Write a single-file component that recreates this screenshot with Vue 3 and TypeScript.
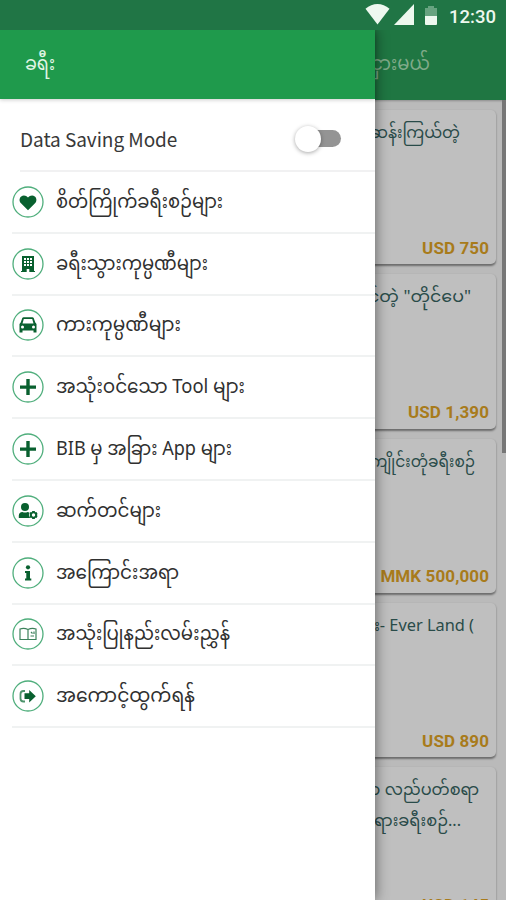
<script setup lang="ts">
interface MenuItem {
  label: string
  icon: string
  width: number
}

interface Tour {
  lines: { text: string; start: number; width: number }[]
  price: string
}

const menu: MenuItem[] = [
  { label: 'စိတ်ကြိုက်ခရီးစဉ်များ', icon: 'heart', width: 167 },
  { label: 'ခရီးသွားကုမ္ပဏီများ', icon: 'building', width: 152 },
  { label: 'ကားကုမ္ပဏီများ', icon: 'car', width: 125 },
  { label: 'အသုံးဝင်သော Tool များ', icon: 'plus', width: 189 },
  { label: 'BIB မှ အခြား App များ', icon: 'plus', width: 176 },
  { label: 'ဆက်တင်များ', icon: 'user', width: 105 },
  { label: 'အကြောင်းအရာ', icon: 'info', width: 123 },
  { label: 'အသုံးပြုနည်းလမ်းညွှန်', icon: 'book', width: 174 },
  { label: 'အကောင့်ထွက်ရန်', icon: 'logout', width: 139 },
]

const tours: Tour[] = [
  { lines: [{ text: 'ဆန်းကြယ်တဲ့', start: 370, width: 90 }], price: 'USD 750' },
  { lines: [{ text: 'င်တဲ့ "တိုင်ပေ"', start: 368, width: 103 }], price: 'USD 1,390' },
  { lines: [{ text: 'ကျိုင်းတုံခရီးစဉ်', start: 370, width: 105 }], price: 'MMK 500,000' },
  { lines: [{ text: 'ား- Ever Land (', start: 357, width: 117 }], price: 'USD 890' },
  {
    lines: [
      { text: 'ရာ လည်ပတ်စရာ', start: 362, width: 117 },
      { text: 'ရားခရီးစဉ်...', start: 374, width: 87 },
    ],
    price: 'USD 145',
  },
]
</script>

<template>
  <div class="screen">
    <header class="status">
      <svg class="wifi" viewBox="0 0 26 22"><path d="M.5 5.500C8-1 18-1 25.500 5.500L13 22Z" /></svg>
      <svg class="signal" viewBox="0 0 20 21"><path d="M20 0V21H0Z" /></svg>
      <svg class="battery" viewBox="0 0 12 19">
        <path class="faint" d="M0 2H3V0H9V2H12V10H0Z" />
        <path d="M0 10H12V18Q12 19 11 19H1Q0 19 0 18Z" />
      </svg>
      <span class="clock">12:30</span>
    </header>

    <div class="body">
      <main class="page">
        <div class="toolbar">
          <svg class="line" width="506" height="40">
            <text x="371" y="24" textLength="59" lengthAdjust="spacingAndGlyphs">ငှားမယ်</text>
          </svg>
        </div>
        <div class="list">
          <article v-for="tour in tours" :key="tour.price" class="card">
            <svg v-for="l in tour.lines" :key="l.text" class="line" width="496" height="31">
              <text :x="l.start" y="21" :textLength="l.width" lengthAdjust="spacingAndGlyphs">{{ l.text }}</text>
            </svg>
            <div class="price">{{ tour.price }}</div>
          </article>
        </div>
        <div class="scrollbar"></div>
      </main>

      <aside class="drawer">
        <div class="drawer-head">
          <svg width="120" height="40">
            <text x="25" y="24" textLength="30" lengthAdjust="spacingAndGlyphs">ခရီး</text>
          </svg>
        </div>
        <div class="saving">
          <span class="saving-label">Data Saving Mode</span>
          <span class="switch"><i class="knob"></i></span>
        </div>
        <nav>
          <div v-for="item in menu" :key="item.label" class="item">
            <svg class="icon" viewBox="0 0 32 32">
              <circle class="ring" cx="16" cy="16" r="15" />
              <path v-if="item.icon === 'heart'" d="M16 24.300L9 17.300C6.800 15 7.400 11.800 9.200 10.400C11.300 8.800 14.300 9.300 16 11.600C17.700 9.300 20.700 8.800 22.800 10.400C24.600 11.800 25.200 15 23 17.300Z" />
              <path v-else-if="item.icon === 'building'" fill-rule="evenodd" d="M10 8H22V23H23V24H17.300V21H14.700V24H9V23H10ZM12 10V12H14V10ZM15 10V12H17V10ZM18 10V12H20V10ZM12 13V15H14V13ZM15 13V15H17V13ZM18 13V15H20V13ZM12 16V18H14V16ZM15 16V18H17V16ZM18 16V18H20V16Z" />
              <path v-else-if="item.icon === 'car'" fill-rule="evenodd" d="M10.300 9Q10.700 8.300 11.600 8.300H20.400Q21.300 8.300 21.700 9L23.300 13.500L24.500 15V23.500H21.500V21.500H10.500V23.500H7.500V15L8.700 13.500ZM11.800 10L10.500 14.500H21.500L20.200 10ZM10.500 16.600A1.500 1.500 0 1 0 10.500 19.600A1.500 1.500 0 1 0 10.500 16.600ZM21.500 16.600A1.500 1.500 0 1 0 21.500 19.600A1.500 1.500 0 1 0 21.500 16.600Z" />
              <path v-else-if="item.icon === 'plus'" d="M14.300 8H17.700V14.400H24V17.700H17.700V24H14.300V17.700H8V14.400H14.300Z" />
              <template v-else-if="item.icon === 'user'">
                <circle cx="13" cy="12" r="4" />
                <path d="M6.800 23V20.500Q7 17 10.500 17Q13 18 15.500 17L17.500 17.400Q16 20.500 18.300 23Z" />
                <path fill-rule="evenodd" d="M20.300 16H22.700L23.200 17.200L24.500 17.100L25.600 19.100L24.800 20L25.600 20.900L24.500 22.900L23.200 22.800L22.700 24H20.300L19.800 22.800L18.500 22.900L17.400 20.900L18.200 20L17.400 19.100L18.500 17.100L19.800 17.200ZM21.500 18.300A1.700 1.700 0 1 0 21.500 21.700A1.700 1.700 0 1 0 21.500 18.300Z" />
              </template>
              <template v-else-if="item.icon === 'info'">
                <circle cx="16" cy="10.300" r="2.100" />
                <path d="M13 14H18V21.500H19.300V23.500H13V21.500H14.300V16H13Z" />
              </template>
              <path v-else-if="item.icon === 'book'" class="outline" d="M16 11.500Q12 9.500 8 11V21.500H24V11Q20 9.500 16 11.500ZM16 11.500V21.500M19 14L20.500 15.500M18.500 18H22M22 13.500V16" />
              <template v-else>
                <path d="M12.500 13.200H17.200V10L23.800 16.200L17.200 22.400V19H12.500Z" />
                <path class="bracket" d="M13 11H11.500Q8.500 11 8.500 14V18.500Q8.500 21.500 11.500 21.500H13" />
              </template>
            </svg>
            <svg class="label" width="250" height="44">
              <text x="0" y="28" :textLength="item.width" lengthAdjust="spacingAndGlyphs">{{ item.label }}</text>
            </svg>
          </div>
        </nav>
      </aside>
    </div>
  </div>
</template>

<style>
body {
  margin: 0;
}
</style>

<style scoped>
.screen {
  width: 506px;
  height: 900px;
  overflow: hidden;
  display: flex;
  flex-direction: column;
  font-family: 'Noto Sans', 'Noto Sans Myanmar', 'Padauk', sans-serif;
}
.status {
  position: relative;
  z-index: 1;
  height: 30px;
  flex: none;
  box-sizing: border-box;
  padding: 0 11px 0 0;
  display: flex;
  align-items: flex-start;
  justify-content: flex-end;
  background: #207545;
  fill: #edf8ef;
}
.wifi {
  width: 25px;
  height: 22px;
  margin: 3px 4px 0 0;
}
.signal {
  width: 20px;
  height: 21px;
  margin: 4px 11px 0 0;
}
.battery {
  width: 12px;
  height: 19px;
  margin: 6px 12px 0 0;
}
.faint {
  opacity: 0.35;
}
.clock {
  font: 500 18.500px/34px Roboto, sans-serif;
  color: #edf8ef;
  width: 46px;
  white-space: nowrap;
}
.body {
  position: relative;
  flex: 1;
  min-height: 0;
}
.page {
  height: 870px;
  overflow: hidden;
  background: #bababa;
}
.toolbar {
  height: 70px;
  box-sizing: border-box;
  padding-top: 16px;
  background: #1f7642;
  box-shadow: 0 1px 2px rgba(0, 0, 0, 0.25);
}
.toolbar text {
  fill: #7faa89;
  font-size: 19px;
}
.line,
.label {
  display: block;
}
.list {
  padding: 10px 10px 0 0;
  display: flex;
  flex-direction: column;
  gap: 10px;
}
.card {
  height: 154.300px;
  flex: none;
  box-sizing: border-box;
  padding-top: 7px;
  display: flex;
  flex-direction: column;
  background: #bfbfbf;
  border-radius: 5px;
  box-shadow: 0 1.500px 2px rgba(0, 0, 0, 0.42);
}
.card text {
  fill: #294b49;
  font-size: 17px;
}
.price {
  margin-top: auto;
  padding: 0 7px 5.600px 0;
  text-align: right;
  font: 700 17px/22px Roboto, sans-serif;
  letter-spacing: 0.1px;
  color: #a87b1b;
}
.scrollbar {
  position: absolute;
  right: 0;
  top: 70px;
  width: 4px;
  height: 353px;
  background: #777;
}
.drawer {
  position: absolute;
  left: 0;
  top: 0;
  width: 375px;
  height: 870px;
  background: #fff;
  box-shadow: 1px 0 12px rgba(0, 0, 0, 0.45);
}
.drawer-head {
  height: 69px;
  box-sizing: border-box;
  padding-top: 16px;
  background: #1f9a4c;
  box-shadow: 0 1px 4px rgba(0, 0, 0, 0.2);
}
.drawer-head text {
  fill: #e2f6e5;
  font-size: 19px;
}
.saving {
  height: 73px;
  box-sizing: border-box;
  margin-left: 20px;
  padding: 8px 34px 0 0;
  display: flex;
  align-items: center;
  justify-content: space-between;
  border-bottom: 2px solid #f1f1f2;
  color: #383838;
}
.saving-label {
  font: 19px/28px 'Noto Sans CJK SC', sans-serif;
  letter-spacing: -0.050px;
}
.switch {
  width: 42px;
  height: 17px;
  display: flex;
  align-items: center;
  border-radius: 9px;
  background: linear-gradient(90deg, transparent 12px, #949494 12px);
}
.knob {
  width: 26px;
  height: 26px;
  margin-left: -4px;
  border-radius: 50%;
  background: #fff;
  box-shadow: 0 1px 4px rgba(0, 0, 0, 0.35);
}
.item {
  height: 61.800px;
  box-sizing: border-box;
  margin-left: 12px;
  display: flex;
  align-items: center;
  gap: 12px;
  border-bottom: 2px solid #f0f2f2;
}
.icon {
  width: 32px;
  height: 32px;
  flex: none;
  fill: #09602f;
}
.ring {
  fill: none;
  stroke: #4fae7c;
  stroke-width: 1.300;
}
.outline {
  fill: none;
  stroke: #3c815b;
  stroke-width: 1.200;
}
.bracket {
  fill: none;
  stroke: #4c936b;
  stroke-width: 1.800;
}
.item text {
  fill: #303030;
  font-size: 19px;
}
</style>
